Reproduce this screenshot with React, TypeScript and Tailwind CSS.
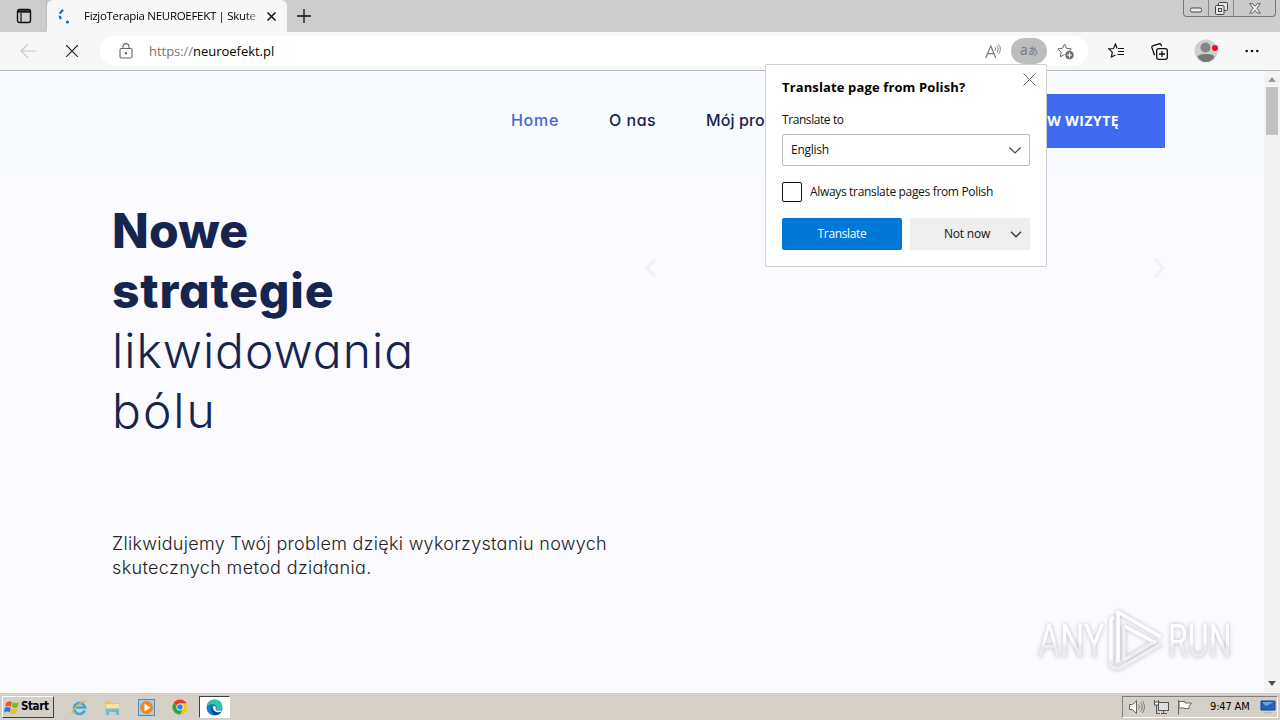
import React from 'react';

const TabBar: React.FC = () => (
  <div className="relative flex h-8 bg-[#cdcdcd]">
    <div className="flex w-[47px] items-center justify-center rounded-br-md border-r border-[#bdbdbd]">
      <svg className="ml-0.5 h-4 w-4" viewBox="0 0 16 16" fill="none" stroke="#111">
        <rect x="1.5" y="1.5" width="13" height="13" rx="2" strokeWidth="1.4" />
        <path d="M2 3.5h12" strokeWidth="2.4" />
        <path d="M5 5v9" strokeWidth="1.2" />
      </svg>
    </div>
    <div className="flex w-60 items-center rounded-t-md bg-[#f7f7f7] pl-[11px]">
      <svg className="h-4 w-4 shrink-0" viewBox="0 0 16 16" fill="none">
        <path d="M5.2 2C1.6 4 .8 8 3 11" stroke="#1f6fae" strokeWidth="2.4" strokeDasharray="5 2" />
        <circle cx="9.5" cy="14" r="1.6" fill="#1f6fae" />
      </svg>
      <span className="ml-2.5 w-[176px] whitespace-nowrap bg-gradient-to-r from-black from-90% to-[#c8c8c8] bg-clip-text font-['Open_Sans','Noto_Sans',sans-serif] text-[11.5px] tracking-[-0.3px] text-transparent">
        FizjoTerapia NEUROEFEKT | Skute
      </span>
      <svg className="ml-[7px] h-[9px] w-[9px]" viewBox="0 0 9 9" stroke="#111" strokeWidth="1.5">
        <path d="M.5.5l8 8M8.5.5l-8 8" />
      </svg>
    </div>
    <svg className="ml-[10px] mt-[9px] h-[14px] w-[14px]" viewBox="0 0 14 14" stroke="#111" strokeWidth="1.3">
      <path d="M7 0v14M0 7h14" />
    </svg>
    <div className="ml-auto mr-1 flex h-[17px] w-[93px] rounded-b border border-t-0 border-[#777] bg-[#cacaca]">
      <div className="flex w-[25px] items-center justify-center border-r border-[#888]">
        <svg className="mt-1 h-1.5 w-3" viewBox="0 0 12 6" fill="#eee" stroke="#444">
          <rect x=".5" y="1" width="11" height="4" rx="1.5" />
        </svg>
      </div>
      <div className="flex w-[25px] items-center justify-center border-r border-[#888]">
        <svg className="h-[13px] w-[13px]" viewBox="0 0 13 13" fill="#e4e4e4" stroke="#444">
          <rect x="3.5" y=".5" width="9" height="8" rx="1" />
          <rect x=".5" y="3.5" width="8.5" height="9" rx="1" />
          <rect x="3.5" y="6.5" width="3" height="3" />
        </svg>
      </div>
      <div className="flex flex-1 items-center justify-center">
        <svg className="h-[11px] w-3" viewBox="0 0 12 11" fill="#eee" stroke="#555" strokeWidth=".9">
          <path d="M.7.7h3L6 3.3 8.3.7h3L7.9 5.3l3.4 4.8h-3L6 7.3 3.7 10.1h-3l3.4-4.8z" />
        </svg>
      </div>
    </div>
  </div>
);

const STAR = 'M7.5 1l2 4.3 4.7.6-3.5 3.2.9 4.7-4.1-2.3-4.2 2.3.9-4.7L.8 5.9l4.7-.6z';

const Toolbar: React.FC = () => (
  <div className="flex h-[39px] items-center border-b border-[#b9b9b9] bg-[#f7f7f7]">
    <svg className="ml-5 h-4 w-4" viewBox="0 0 16 16" fill="none" stroke="#c9c9c9" strokeWidth="1.2">
      <path d="M16 8H1M8 1L1 8l7 7" />
    </svg>
    <svg className="ml-[30px] h-3 w-3" viewBox="0 0 12 12" stroke="#222" strokeWidth="1.2">
      <path d="M0 0l12 12M12 0L0 12" />
    </svg>
    <div className="ml-[22px] flex h-[30px] w-[988px] items-center rounded-full bg-white pl-[19px] pr-[14px]">
      <svg className="h-4 w-[14px]" viewBox="0 0 14 16" fill="none" stroke="#666" strokeWidth="1.1">
        <rect x="1" y="5.5" width="12" height="9.5" rx="1.5" />
        <path d="M4 5.5V3.6a3 3 0 016 0v1.9" />
        <circle cx="7" cy="10.3" r=".7" fill="#666" />
      </svg>
      <span className="ml-4 pt-0.5 font-['Open_Sans','Noto_Sans',sans-serif] text-[13px] tracking-[-0.03px] text-black">
        <span className="text-[#777]">https://</span>neuroefekt.pl
      </span>
      <svg className="ml-auto h-[15px] w-4" viewBox="0 0 16 15" fill="none" stroke="#777">
        <path d="M.6 14L5.8 2l5 12M2.5 9.7h6.6" strokeWidth="1.2" />
        <path d="M9.8 3.2c1 1 1 2.5.3 3.5M11.6 1.5c2 2 2 5 .4 7M13.4.3c2.6 2.7 2.4 7 .4 9.5" strokeWidth=".9" />
      </svg>
      <div className="ml-[10px] flex h-[26px] w-9 items-center justify-center rounded-full bg-[#bdbdbd]">
        <span className="pb-0.5 font-['Open_Sans','Noto_Sans_CJK_JP',sans-serif] text-[14px] leading-none text-[#777]">
          a<span className="font-['Noto_Sans_CJK_JP',sans-serif] text-[10px]">あ</span>
        </span>
      </div>
      <svg className="ml-[10px] h-[17px] w-[17px]" viewBox="0 0 17 17" fill="none" stroke="#666">
        <path d={STAR} />
        <circle cx="12.5" cy="12" r="4.5" fill="#666" stroke="#fff" strokeWidth=".6" />
        <path d="M12.5 9.5v5M10 12h5" stroke="#fff" strokeWidth="1.2" />
      </svg>
    </div>
    <svg className="ml-5 h-4 w-[17px]" viewBox="0 0 17 16" fill="none" stroke="#111" strokeWidth="1.2">
      <path d="M9 5.5L7.5 1l-2 4.5-4.7.4 3.5 3.2-.9 4.9L7.5 12M10 5.5h6M10 8.5h6M9.5 11.5H16" />
    </svg>
    <svg className="ml-[26px] h-[17px] w-[17px]" viewBox="0 0 17 17" fill="none" stroke="#111" strokeWidth="1.3">
      <path d="M4 12l-.7-.5L.9 4.5c-.2-.8 0-1.4.7-1.7L8 .8c.9-.2 1.6 0 2 .9l.5 1.5" />
      <rect x="5.7" y="5.7" width="10.6" height="10.6" rx="2" />
      <path d="M11 8v6M8 11h6" />
    </svg>
    <svg className="ml-[26px] h-6 w-6" viewBox="0 0 24 24">
      <circle cx="12" cy="12" r="11.5" fill="#cfcfcf" />
      <circle cx="11.5" cy="8.5" r="5" fill="#858585" />
      <path d="M3.5 17.5c2-3.5 15-3.5 17 0-3 7.3-14 7.3-17 0z" fill="#777" />
      <circle cx="21" cy="9" r="3" fill="#e81123" />
    </svg>
    <svg className="ml-[27px] h-3 w-[14px]" viewBox="0 0 14 12" fill="#111">
      <circle cx="1.7" cy="6" r="1.3" />
      <circle cx="7" cy="6" r="1.3" />
      <circle cx="12.3" cy="6" r="1.3" />
    </svg>
  </div>
);

const TranslatePopup: React.FC = () => (
  <div className="absolute left-[765px] top-16 z-10 flex h-[203px] w-[282px] flex-col rounded-[2px] border border-[#cfcfcf] bg-white px-4 font-['Open_Sans','Noto_Sans',sans-serif] text-xs text-[#111]">
    <div className="mt-2 flex h-7 justify-between">
      <h2 className="mt-[5px] text-[13px] font-bold leading-[18px] tracking-[0.13px] text-black">
        Translate page from Polish?
      </h2>
      <svg className="mr-[-6px] h-[13px] w-[13px]" viewBox="0 0 13 13" stroke="#666">
        <path d="M.5.5l12 12M12.5.5l-12 12" />
      </svg>
    </div>
    <label className="mt-[11px] h-4 leading-4 tracking-[-0.42px]">Translate to</label>
    <div className="mt-[6px] flex h-8 shrink-0 items-center justify-between rounded-[2px] border border-[#bcbcbc] px-2">
      <span className="tracking-[-0.25px]">English</span>
      <svg className="h-[7px] w-3" viewBox="0 0 12 7" fill="none" stroke="#444" strokeWidth="1.2">
        <path d="M.5.5L6 6l5.5-5.5" />
      </svg>
    </div>
    <div className="mt-4 flex h-5 shrink-0 items-center gap-2">
      <span className="h-5 w-5 rounded-[2px] border border-[#111]" />
      <span className="tracking-[-0.33px]">Always translate pages from Polish</span>
    </div>
    <div className="mt-4 flex h-8 shrink-0 gap-2">
      <button className="w-[120px] rounded-[2px] bg-[#0078d7] tracking-[-0.35px] text-white">Translate</button>
      <button className="flex w-[120px] items-center rounded-[2px] bg-[#eee] pl-[34px] tracking-[-0.2px]">
        Not now
        <svg className="ml-auto mr-2 h-[7px] w-3" viewBox="0 0 12 7" fill="none" stroke="#333" strokeWidth="1.4">
          <path d="M1 .8l5 5 5-5" />
        </svg>
      </button>
    </div>
  </div>
);

const Watermark: React.FC = () => (
  <div className="absolute left-[1038px] top-[608px] flex items-center drop-shadow-[0_0_2px_rgba(0,0,0,0.25)]">
    <span className="mr-[-27px] w-[92px] shrink-0 origin-left scale-x-[0.74] bg-gradient-to-b from-white from-50% to-[#ececec] to-60% bg-clip-text font-['Roboto',sans-serif] text-[46px] leading-[66px] text-transparent">
      ANY
    </span>
    <svg className="ml-[3px] h-[66px] w-[61px]" viewBox="0 0 61 66" fill="none" strokeWidth="3.6" strokeLinejoin="round">
      <path d="M5 56V13q0-3 3-4M12 54V4l43 25M18 18l32 17" stroke="#fff" />
      <path d="M12 61l43-25M18 18v34l30-18M5 52v6l7 3" stroke="#efefef" />
    </svg>
    <span className="ml-px w-[95px] shrink-0 origin-left scale-x-[0.7] bg-gradient-to-b from-white from-50% to-[#ececec] to-60% bg-clip-text font-['Roboto',sans-serif] text-[46px] leading-[66px] text-transparent">
      RUN
    </span>
  </div>
);

const Page: React.FC = () => (
  <div className="flex h-[621px] bg-[#fafaff] font-['Inter','Open_Sans',sans-serif] [font-feature-settings:'cv11']">
    <div className="flex flex-1 flex-col">
      <header className="flex h-[99px] items-center bg-[#f7fbff] pl-[511px] text-base font-medium text-[#17254e]">
        <span className="w-[98px] pb-0.5 tracking-[0.7px] text-[#4268d8]">Home</span>
        <span className="w-[97px] pb-0.5 tracking-[0.5px]">O nas</span>
        <span className="w-[59px] overflow-hidden whitespace-nowrap pb-0.5 tracking-[0.1px]">Mój pro</span>
        <a className="ml-auto mr-[99px] flex h-[54px] w-[200px] items-center justify-end bg-[#406bf0] pr-[46px] font-['Open_Sans',sans-serif] text-sm font-bold tracking-[0.45px] text-white">
          W WIZYTĘ
        </a>
      </header>
      <main className="flex">
        <div className="pl-28 pt-[31px] text-[#17254e]">
          <h1 className="w-[532px] text-[48px] leading-[60px]">
            <span className="block font-extrabold tracking-[0.2px]">Nowe</span>
            <span className="block font-extrabold tracking-[0.8px]">strategie</span>
            <span className="block font-light tracking-[1px]">likwidowania</span>
            <span className="block font-light tracking-[2px]">bólu</span>
          </h1>
          <p className="mt-[91px] whitespace-nowrap text-lg font-light leading-6 tracking-[0.29px] text-[#222]">
            Zlikwidujemy Twój problem dzięki wykorzystaniu nowych<br />
            <span className="tracking-[0.36px]">skutecznych metod działania.</span>
          </p>
        </div>
        <div className="flex w-[522px] justify-between pt-[88px]">
          <svg className="h-5 w-3" viewBox="0 0 12 20" fill="none" stroke="#f1f1f3" strokeWidth="3">
            <path d="M11 1L3 10l8 9" />
          </svg>
          <svg className="h-5 w-3" viewBox="0 0 12 20" fill="none" stroke="#f1f1f3" strokeWidth="3">
            <path d="M1 1l8 9-8 9" />
          </svg>
        </div>
      </main>
    </div>
    <div className="flex w-4 flex-col items-center bg-[#f3f3f3] pb-1.5 pt-1.5">
      <svg className="h-[5px] w-2" viewBox="0 0 8 5" fill="#999">
        <path d="M0 5l4-5 4 5z" />
      </svg>
      <div className="mt-[5px] h-12 w-3 bg-[#c1c1c1]" />
      <svg className="mt-auto h-[5px] w-2" viewBox="0 0 8 5" fill="#505050">
        <path d="M0 0l4 5 4-5z" />
      </svg>
    </div>
  </div>
);

const Taskbar: React.FC = () => (
  <div className="flex h-7 items-center border-t border-white bg-[#d4d0c8] pt-px font-['DejaVu_Sans_Condensed','DejaVu_Sans',sans-serif] text-[11px] text-black">
    <div className="ml-0.5 flex h-[22px] w-[52px] items-center border border-b-[#404040] border-l-white border-r-[#404040] border-t-white pl-px">
      <svg className="h-[15px] w-4 shrink-0" viewBox="0 0 16 15">
        <path d="M2 3q3-3 6-1L7 7Q4 5 1 7z" fill="#ea5a24" />
        <path d="M9 2q3 2 6 0l-1.5 5Q11 9 8 7z" fill="#79b82a" />
        <path d="M.8 8q3-2 6 0l-1 4.500Q3 10.500 0 12.500z" fill="#2c7fd0" />
        <path d="M7.5 8q3 2 6 0L12 13q-3 2-6 0z" fill="#f6bd18" />
      </svg>
      <b className="ml-px text-[11.5px] tracking-[-0.4px]">Start</b>
    </div>
    <svg className="ml-[17px] h-[17px] w-[17px]" viewBox="0 0 17 17" fill="none">
      <path d="M13.7 11.5a5.5 5.5 0 11.3-3H5" stroke="#48a4df" strokeWidth="2.7" />
      <path d="M1.5 15C-1 12 12 0 16 2.5" stroke="#e6b83a" strokeWidth="1.4" />
    </svg>
    <svg className="ml-4 h-[17px] w-[17px]" viewBox="0 0 17 17">
      <path d="M1 2h6l1 2h7v9H1z" fill="#e9c860" />
      <path d="M2.5 5H15v8H2.5z" fill="#f8e49a" />
      <path d="M2 16V9.5h13V16h-3v-3H5v3z" fill="#77b8da" />
    </svg>
    <svg className="ml-[17px] h-[17px] w-[17px]" viewBox="0 0 17 17">
      <rect x=".5" y=".5" width="16" height="16" fill="#a9cce9" stroke="#528cbd" />
      <circle cx="8.5" cy="8.5" r="6.5" fill="#f0861c" />
      <path d="M6.5 4.5l6 4-6 4z" fill="#fff" />
    </svg>
    <svg className="ml-[17px] h-4 w-4" viewBox="0 0 16 16">
      <circle cx="8" cy="8" r="7.5" fill="#fbc116" />
      <path d="M8 8L1.5 4.25A7.5 7.5 0 0114.5 4.25H8z" fill="#e33b2e" />
      <path d="M8 8L1.5 4.25A7.5 7.5 0 008 15.5l3-6z" fill="#2ba24c" />
      <circle cx="8" cy="8" r="3.6" fill="#fff" />
      <circle cx="8" cy="8" r="2.8" fill="#3d7de0" />
    </svg>
    <div className="ml-[11px] flex h-[22px] w-[31px] items-center justify-center border border-b-white border-l-[#404040] border-r-white border-t-[#404040] bg-white">
      <svg className="h-[17px] w-[17px]" viewBox="0 0 16 16">
        <circle cx="8" cy="8" r="7.5" fill="#147fc7" />
        <path d="M.6 6.5C2 1 7-.3 11 1.2c4 1.5 5.5 6 3.5 8.3-1.5 1.5-4 1.2-5 .5 2-3-.5-5-3-5S2 5.5.6 6.5z" fill="#36c6a6" />
        <path d="M6 6.5c-3 2.5-1 7.5 3.5 8.7 2-.2 4-1.5 5-3.2-4 1.5-8-.5-8.5-5.5z" fill="#0b4a91" />
        <path d="M6.5 7.5C8 5.5 10 7.5 9 10c1.5 1.5 4 1.2 5.7.3l-.8 1.7c-4 1.5-7.4-1-7.4-4.5z" fill="#fff" />
      </svg>
    </div>
    <div className="ml-auto mr-0.5 flex h-[22px] w-[156px] items-center border border-b-white border-l-[#808080] border-r-white border-t-[#808080] pl-1.5">
      <svg className="h-4 w-4" viewBox="0 0 16 16" fill="#fff" stroke="#666">
        <path d="M.5 5.5h3l4-4v13l-4-4h-3z" />
        <path d="M9.5 5.5q2 2.5 0 5M11.5 3.5q3.5 4.5 0 9M13.5 2q4 6 0 12" fill="none" strokeWidth=".8" />
      </svg>
      <svg className="ml-2 h-4 w-4" viewBox="0 0 16 16" fill="#fff" stroke="#555">
        <rect x="5.5" y="3.5" width="10" height="8" fill="#ddd" />
        <path d="M8 14.5h6M10.5 12v2M1.5 1v4h4V1M3.5 5v9.5H7" fill="none" />
        <rect x="1.5" y="3" width="4" height="3" />
      </svg>
      <svg className="ml-2 h-4 w-4" viewBox="0 0 16 16" fill="#fff" stroke="#666">
        <path d="M1.5 1v14.5M2 2.5h6V4h6.5L12 7.500v2H7.500V9H2z" />
      </svg>
      <span className="ml-[17px] whitespace-nowrap text-[11px] tracking-[-0.15px]">9:47 AM</span>
      <svg className="ml-auto mr-px h-[14px] w-4 shrink-0" viewBox="0 0 16 14">
        <path d="M1 1h14v9H1z" fill="#2365bd" stroke="#17437e" />
        <path d="M2 2h12L6 6z" fill="#6ca5e5" />
        <path d="M4 12h8v1.5H4z" fill="#bbb" />
      </svg>
    </div>
  </div>
);

const App: React.FC = () => {
  return (
    <div className="relative h-[720px] w-[1280px] overflow-hidden">
      <TabBar />
      <Toolbar />
      <Page />
      <Taskbar />
      <TranslatePopup />
      <Watermark />
    </div>
  );
};

export default App;
